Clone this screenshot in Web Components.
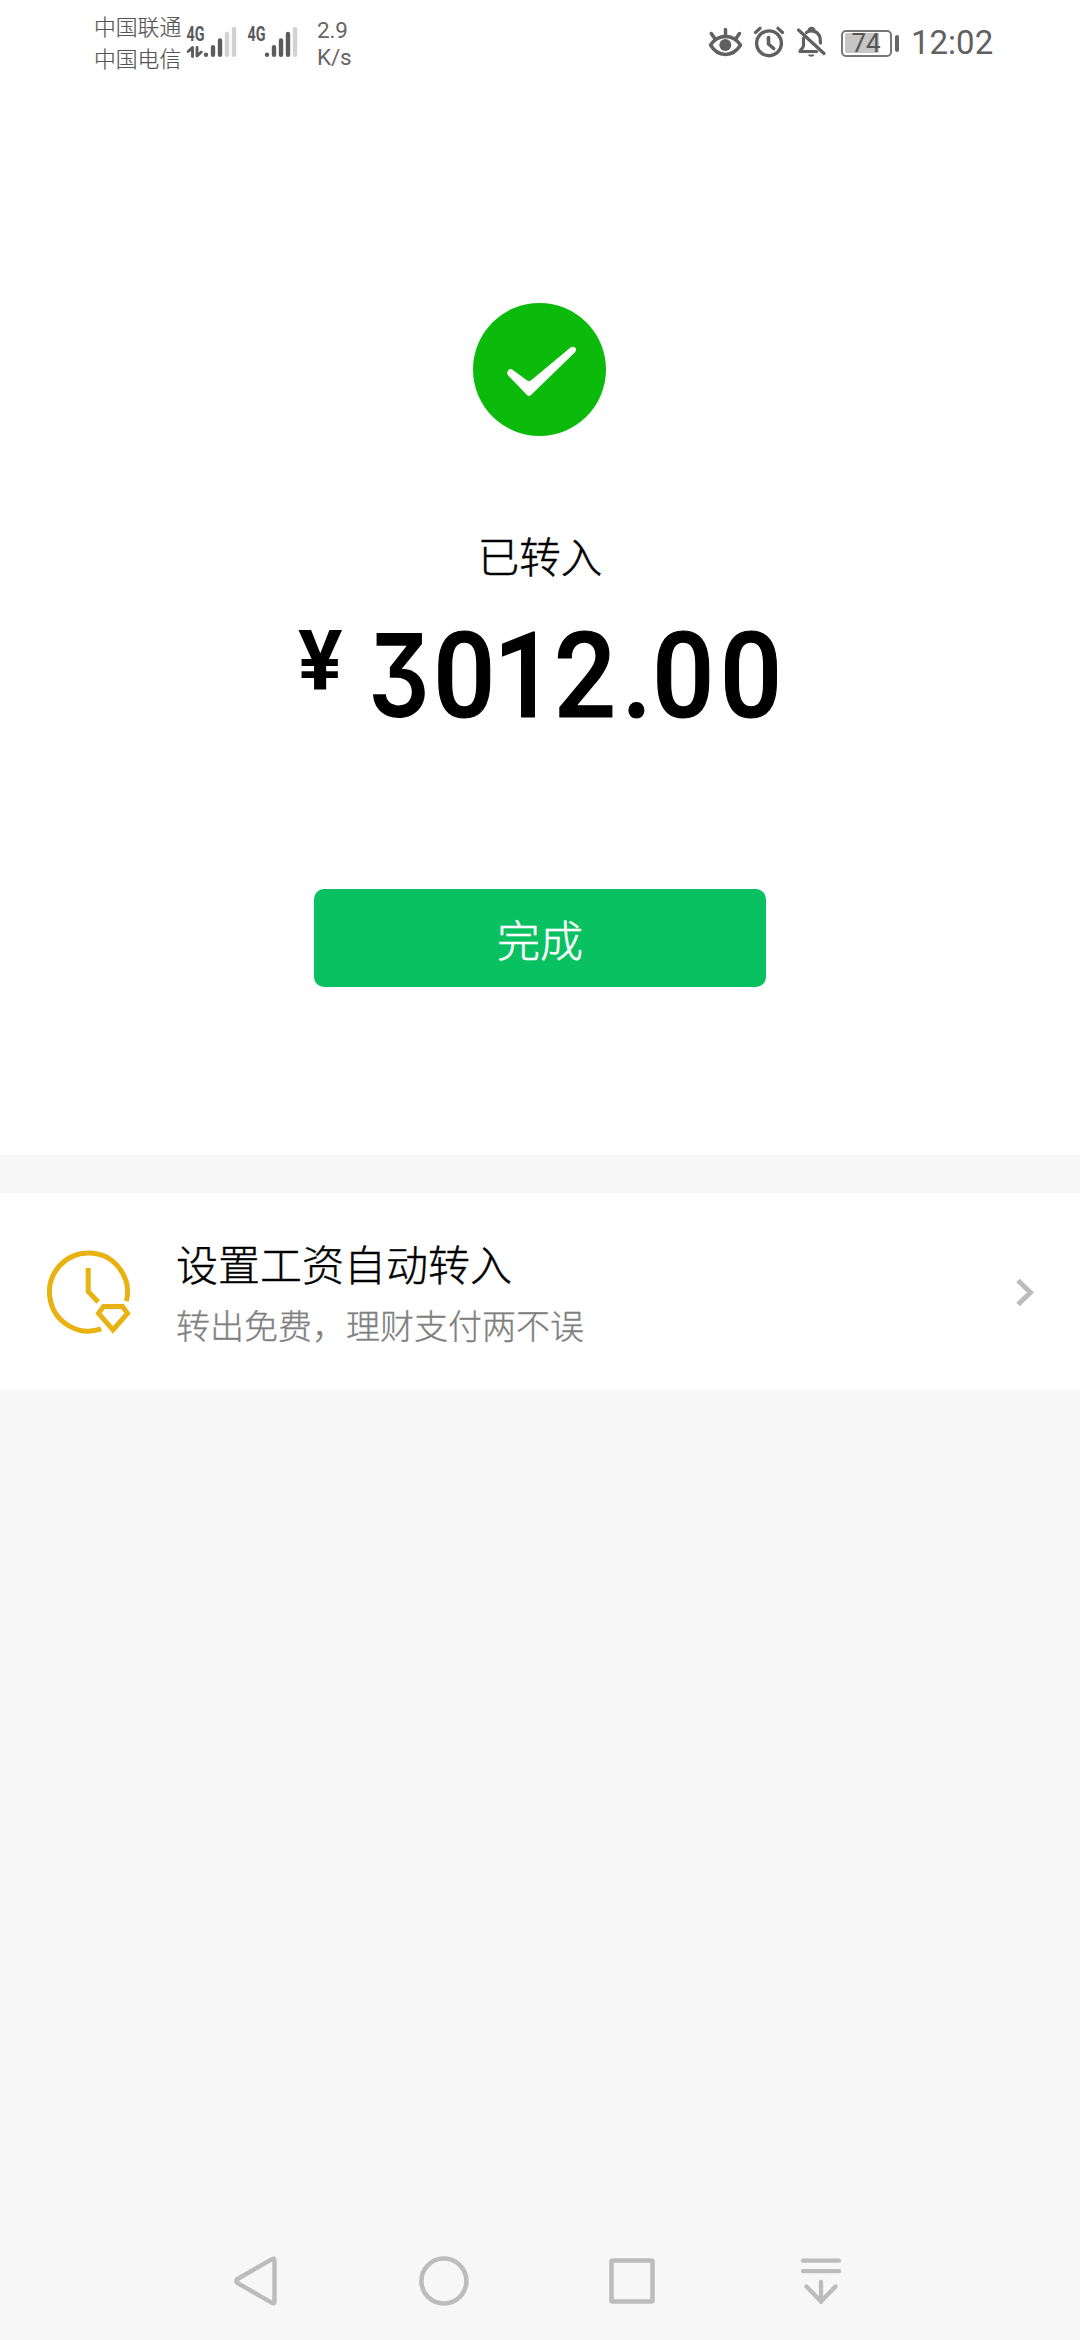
<!DOCTYPE html>
<html lang="zh-CN">
<head>
<meta charset="utf-8">
<title>已转入</title>
<style>
html,body{margin:0;padding:0;background:#f7f7f7}
body{width:1080px;height:2340px;overflow:hidden;font-family:Roboto,"Noto Sans CJK SC",sans-serif;color:#000}
</style>
</head>
<body>
<transfer-screen></transfer-screen>
<script>
const define=(name,html)=>customElements.define(name,class extends HTMLElement{
  constructor(){super();this.attachShadow({mode:'open'}).innerHTML=html;}
});

define('signal-meters',`<style>:host{display:block;width:116px;height:86px}svg{display:block}text{font:700 20px Roboto,sans-serif;fill:#5a5a5a}</style>
<svg width="116" height="86" viewBox="184 0 116 86">
<text x="186.500" y="41" textLength="18" lengthAdjust="spacingAndGlyphs">4G</text>
<text x="247.500" y="41" textLength="18" lengthAdjust="spacingAndGlyphs">4G</text>
<g fill="none" stroke-linecap="round" stroke="#5c5c5c" stroke-width="4.4">
<path d="M206 54.6v.2M213 47.2v7.6M220 40.5v14.3M267 54.6v.2M274 47.2v7.6M281 40.5v14.3M288 34v20.8"/>
<path stroke="#d2d2d2" d="M227 34v20.8M234 29v25.8M295 29v25.8"/></g>
<path d="M188.200 51.500 192.500 47.500V56.500M197 47.500V56L201.300 52" fill="none" stroke="#5c5c5c" stroke-width="2.900" stroke-linecap="round" stroke-linejoin="round"/>
</svg>`);

define('status-icons',`<style>:host{display:block;width:130px;height:86px}svg{display:block}</style>
<svg width="130" height="86" viewBox="704 0 130 86" fill="none" stroke="#606060" stroke-linecap="round" stroke-linejoin="round">
<path d="M710.500 45C718 33.500 733 33.500 740.500 45C733 57.500 718 57.500 710.500 45Z" stroke-width="3.500"/>
<circle cx="725.300" cy="45" r="6" fill="#606060" stroke="none"/>
<path d="M725.500 29.500v7M711.300 33.500l3.500 5M739.500 33.500l-3.500 5" stroke-width="3.500"/>
<circle cx="769" cy="43.300" r="12.400" stroke-width="3.400"/>
<path d="M768.500 37.500v6.500l5.200 4.500" stroke-width="3.600"/>
<path d="M755.500 32.500l4.500-4.200M782.500 32.500l-4.500-4.200" stroke-width="3.200"/>
<path d="M798.500 30 824 53.500" stroke-width="3.200"/>
<path d="M803.500 38v7.500c0 3-3.500 4-3.500 6H816.500M806.500 32.500C810 29.800 817 30.500 819.500 36c1 2 1 4.500 1 7M809 30.500c.5-3 4.500-3 5 0" stroke-width="3.200"/>
<path d="M808 54.500h6.500c-1 3-5.500 3-6.500 0z" fill="#606060" stroke="none"/>
</svg>`);

define('battery-level',`<style>:host{display:flex;align-items:center;width:60px;height:28px}
.b{box-sizing:border-box;width:51px;height:27px;border:2px solid #777;border-radius:5px;padding:1.500px;display:flex}
.f{width:34px;height:100%;background:#c6c6c6;border-radius:2px 0 0 2px;display:flex;align-items:center;justify-content:flex-start}
.t{padding-left:7px;font:26px/20px Roboto;color:#555}
.n{width:4px;height:17px;border-radius:2px;background:#666;margin-left:3px}</style>
<div class="b"><div class="f"><span class="t"><slot></slot></span></div></div><div class="n"></div>`);

define('status-bar',`<style>:host{display:flex;height:86px;color:#666;font-family:Roboto,"Noto Sans CJK SC",sans-serif}
.c{width:90px;padding:12px 0 0 94px;font-size:21.800px;line-height:32px;white-space:nowrap;font-weight:300;color:#555;-webkit-text-stroke:.2px #555}
.s{width:60px;padding:17px 0 0 17px;font-size:22.500px;line-height:27px;white-space:nowrap;letter-spacing:-.2px}
.i{margin-left:327px}
battery-level{margin:29px 0 0 7px}
.t{padding:23px 0 0 10px;font-size:33px;line-height:40px;color:#606060}</style>
<div class="c"><div>中国联通</div><div>中国电信</div></div><signal-meters></signal-meters>
<div class="s"><div>2.9</div><div>K/s</div></div>
<status-icons class="i"></status-icons><battery-level>74</battery-level><div class="t">12:02</div>`);

define('money-amount',`<style>:host{display:flex;justify-content:flex-start;align-items:flex-start;height:100px;font-family:Roboto,sans-serif;font-weight:500}
.y{font-size:83px;line-height:84px;width:70.400px;padding:4px 0 0 298px;font-weight:700}
.n{display:block;font-size:118px;line-height:118px;white-space:nowrap;letter-spacing:6.100px;transform:scaleX(.925);transform-origin:0 0;-webkit-text-stroke:1.200px #000}
.three{display:inline-block;width:70.600px;font-family:Inter;font-feature-settings:"cv09";font-weight:600;font-size:115.500px;letter-spacing:0;transform:scaleX(.905);transform-origin:0 0;-webkit-text-stroke:0}
.zero{letter-spacing:-1.900px}.one{letter-spacing:-1.800px}.dot{letter-spacing:.4px}</style>
<span class="y">¥</span><span class="n"><span class="three">3</span><span class="zero">0</span><span class="one">1</span>2<span class="dot">.</span>00</span>`);

define('success-mark',`<style>:host{display:block;width:134px;height:134px}svg{display:block}</style>
<svg width="134" height="134" viewBox="473 303 134 134"><circle cx="539.500" cy="369.500" r="66.500" fill="#0bba0a"/>
<path d="M508 375.200C505.500 372.500 509 367.200 512.500 369.800L526.500 380Q529 381.800 531.500 380L570.500 347.500C574.500 344.800 578 349 575 352.200L531 395Q529 397.200 527 395Z" fill="#fff"/></svg>`);

define('primary-button',`<style>:host{display:block}button{display:block;width:452px;height:98px;border:0;border-radius:10px;background:#09c160;color:#fff;font:300 43px/97px "Noto Sans CJK SC",sans-serif;-webkit-text-stroke:.5px #fff;padding:0;margin:0}</style><button><slot></slot></button>`);

define('result-panel',`<style>:host{display:flex;flex-direction:column;align-items:center;height:1069px;background:#fff}
success-mark{margin:217px 0 0 0}
.l{margin-top:88px;font:300 41.500px/60px "Noto Sans CJK SC",sans-serif;-webkit-text-stroke:.5px #000}
money-amount{width:1080px;margin-top:31px}
primary-button{margin-top:173px}</style>
<success-mark></success-mark><div class="l">已转入</div><money-amount></money-amount><primary-button>完成</primary-button>`);

define('salary-icon',`<style>:host{display:block;width:86px;height:86px}svg{display:block}</style>
<svg width="86" height="86" viewBox="46 1249 86 86" fill="none" stroke="#e9b213" stroke-width="5">
<path d="M126.400 1301.200A39 39 0 1 0 101.200 1328.900"/><path d="M88.200 1268v23.500l10 10.500"/>
<path d="M103.500 1306.500h19l5 6.800-14.500 16.700-14.500-16.700Z" stroke-linejoin="miter"/></svg>`);

define('promo-row',`<style>:host{display:flex;height:197px;background:#fff;align-items:flex-start;font-family:"Noto Sans CJK SC",sans-serif}
salary-icon{margin:56px 0 0 46px}
.x{margin-left:44px;padding-top:40px;flex:1}
.a{font-size:42px;line-height:60px;font-weight:300;-webkit-text-stroke:.4px #000}.b{font-size:34px;line-height:50px;color:#808080;margin-top:7px;font-weight:300;-webkit-text-stroke:.3px #808080}
.v{margin:83px 46px 0 0;display:block}</style>
<salary-icon></salary-icon><div class="x"><div class="a"><slot name="title"></slot></div><div class="b"><slot></slot></div></div>
<svg class="v" width="20" height="32" viewBox="1014 1276 20 32"><path d="M1018 1280.500 1030.500 1292.500 1018 1304.500" fill="none" stroke="#bcbcbc" stroke-width="5"/></svg>`);

define('nav-bar',`<style>:host{display:flex;justify-content:space-between;height:118px;padding:0 234px 0 230px;align-items:center}svg{display:block}</style>
<svg width="52" height="56" viewBox="230 2253 52 56" fill="none" stroke="#bcbcbc" stroke-width="4.400" stroke-linejoin="round"><path d="M274.500 2260.500V2301.500Q274.500 2304.500 272 2302.800L237.500 2283Q235 2281 237.500 2279L272 2259.200Q274.500 2257.500 274.500 2260.500Z"/></svg>
<svg width="56" height="56" viewBox="416 2253 56 56" fill="none" stroke="#bcbcbc" stroke-width="4.500"><circle cx="443.900" cy="2281" r="22.500"/></svg>
<svg width="56" height="56" viewBox="606 2253 56 56" fill="none" stroke="#bcbcbc" stroke-width="4.500"><rect x="611.500" y="2260.500" width="41" height="41" rx="1"/></svg>
<svg width="50" height="56" viewBox="796 2253 50 56" fill="none" stroke="#bcbcbc" stroke-width="4.300" stroke-linecap="round" stroke-linejoin="round"><path d="M803 2260.700h36M803 2271.200h36M821 2282v20M806.500 2286.500 821 2301.500 835.500 2286.500"/></svg>`);

define('transfer-screen',`<style>:host{display:flex;flex-direction:column;width:1080px;height:2340px;background:#f7f7f7}
status-bar{background:#fff}promo-row{margin-top:38px}nav-bar{margin-top:auto}</style>
<status-bar></status-bar><result-panel></result-panel>
<promo-row><span slot="title">设置工资自动转入</span>转出免费，理财支付两不误</promo-row><nav-bar></nav-bar>`);
</script>
</body>
</html>
